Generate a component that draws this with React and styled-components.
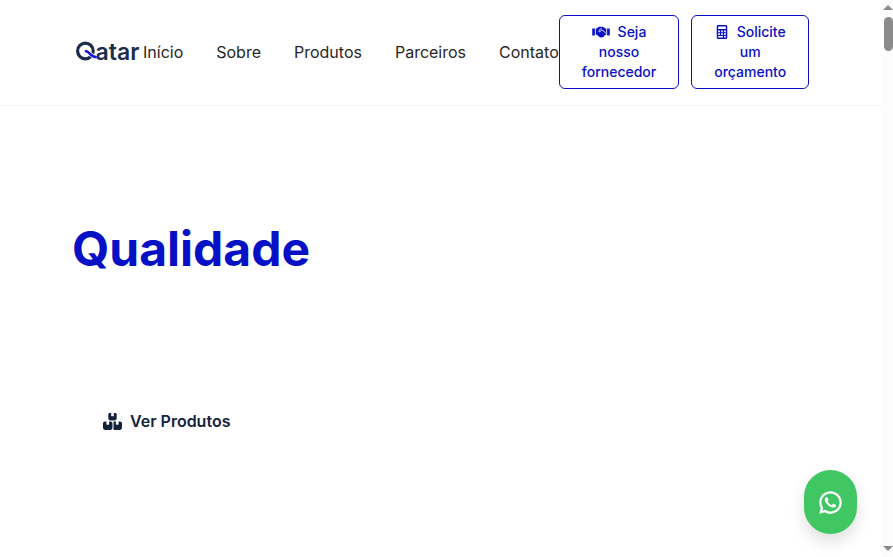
import React from "react";
import styled, { createGlobalStyle } from "styled-components";
import { FaBoxesStacked } from "react-icons/fa6";
import { RiWhatsappLine } from "react-icons/ri";

const GlobalStyle = createGlobalStyle`
  *, *::before, *::after { box-sizing: border-box; }
  body {
    margin: 0;
    overflow: hidden;
    background: #fff;
    font-family: Inter, "Liberation Sans", sans-serif;
    font-size: 16px;
    line-height: 24px;
  }
`;

const Shell = styled.div`
  display: flex;
  height: 100vh;
`;

const Page = styled.div`
  flex: 1;
  min-width: 0;
`;

const Header = styled.header`
  display: flex;
  align-items: center;
  justify-content: space-between;
  padding: 15px 72px 16px;
  border-bottom: 1px solid #f3f4f6;
`;

const LogoLink = styled.a`
  display: flex;
  flex: none;
`;

const Nav = styled.nav`
  display: flex;
  gap: 33px;
`;

const NavLink = styled.a`
  color: #262626;
  text-decoration: none;
`;

const Actions = styled.div`
  display: flex;
  gap: 12px;
`;

const OutlineButton = styled.button`
  width: min-content;
  padding: 6px 22px;
  border: 1px solid #0a10c4;
  border-radius: 6px;
  background: #fff;
  color: #0a10c4;
  font: 500 14px/20px Inter, "Liberation Sans", sans-serif;
  cursor: pointer;
`;

const ButtonLead = styled.span`
  display: inline-flex;
  align-items: center;
  gap: 8px;
  height: 20px;
  vertical-align: top;
`;

const Hero = styled.main`
  display: flex;
  flex-direction: column;
  align-items: flex-start;
  gap: 118px;
  padding: 113px 72px 0;
`;

const Title = styled.h1`
  margin: 0;
  color: #0610c4;
  font-size: 48px;
  font-weight: 700;
  line-height: 60px;
`;

const ProductsLink = styled.a`
  display: flex;
  align-items: center;
  gap: 8px;
  padding: 12px 31px;
  color: #14233c;
  font-weight: 600;
  text-decoration: none;
`;

const ChatButton = styled.button`
  position: fixed;
  right: 36px;
  bottom: 23px;
  display: flex;
  align-items: center;
  justify-content: center;
  width: 53px;
  height: 64px;
  padding: 0;
  border: 0;
  border-radius: 27px;
  background: #40c763;
  color: #fff;
  box-shadow: 0 8px 16px rgba(0, 0, 0, 0.12);
  cursor: pointer;
`;

const ScrollTrack = styled.div`
  display: flex;
  flex: none;
  flex-direction: column;
  align-items: flex-end;
  width: 12px;
  padding: 5px 0 6px;
  background: #fcfcfc;
`;

const ScrollArrow = styled.svg`
  display: block;
  width: 10px;
  height: 5px;
  fill: #8b8b8b;
`;

const ScrollThumb = styled.div`
  flex: none;
  width: 9px;
  height: 34px;
  margin: 7px 0 auto;
  border-radius: 5px;
  background: #8b8b8b;
`;

function Logo() {
  return (
    <svg width="71" height="32" viewBox="0 0 71 32" role="img" aria-label="Qatar">
      <circle cx="13.4" cy="15" r="7.8" fill="none" stroke="#1b2d4a" strokeWidth="3.2" />
      <text x="23.6" y="23.6" fill="#1b2d4a" fontFamily="Inter, sans-serif" fontSize="23" fontWeight="600">
        atar
      </text>
      <path d="M13 15c5-.4 5 6.200 12 6.200" fill="none" stroke="#fff" strokeWidth="4" />
      <path d="M12.800 15c5-.4 5 6.200 12 6.200" fill="none" stroke="#1113e0" strokeWidth="2.400" />
    </svg>
  );
}

function HandshakeIcon() {
  return (
    <svg width="18" height="14" viewBox="0 0 640 512" fill="currentColor" aria-hidden="true">
      <path d="M0 128h96v224a32 32 0 0 1-32 32H0zM544 128h96v256h-64a32 32 0 0 1-32-32z" />
      <path d="M128 128h36l66-58q14-8 30-6h120q18 0 30 10l62 54h40v224h-32l-66 82q-20 20-46 8-24 24-52 4-30 18-52-6L174 352h-46z" />
      <path
        d="M340 116 246 202q-22 26 4 44 18 8 34-6l68-62 130 106"
        fill="none"
        stroke="#fff"
        strokeWidth="32"
        strokeLinecap="round"
      />
    </svg>
  );
}

function CalculatorIcon() {
  return (
    <svg width="14" height="14" viewBox="-64 0 512 512" fill="currentColor" aria-hidden="true">
      <path
        fillRule="evenodd"
        d="M48 0h288a48 48 0 0 1 48 48v416a48 48 0 0 1-48 48H48a48 48 0 0 1-48-48V48A48 48 0 0 1 48 0zM52 56v92h280V56zM52 204v60h64v-60zM160 204v60h64v-60zM268 204v60h64v-60zM52 304v60h64v-60zM160 304v60h64v-60zM268 304v60h64v-60zM52 404v56h172v-56zM268 404v56h64v-56z"
      />
    </svg>
  );
}

const links = [
  ["Início", "#inicio"],
  ["Sobre", "#sobre"],
  ["Produtos", "#produtos"],
  ["Parceiros", "#parceiros"],
  ["Contato", "#contato"],
];

export default function App() {
  return (
    <>
      <GlobalStyle />
      <Shell>
        <Page>
          <Header>
            <LogoLink href="#inicio"><Logo /></LogoLink>
            <Nav>
              {links.map(([label, href]) => (
                <NavLink key={href} href={href}>{label}</NavLink>
              ))}
            </Nav>
            <Actions>
              <OutlineButton type="button">
                <ButtonLead><HandshakeIcon />Seja</ButtonLead> nosso fornecedor
              </OutlineButton>
              <OutlineButton type="button">
                <ButtonLead><CalculatorIcon />Solicite</ButtonLead> um orçamento
              </OutlineButton>
            </Actions>
          </Header>
          <Hero>
            <Title>Qualidade</Title>
            <ProductsLink href="#produtos"><FaBoxesStacked size={19} />Ver Produtos</ProductsLink>
          </Hero>
        </Page>
        <ScrollTrack aria-hidden="true">
          <ScrollArrow viewBox="0 0 10 5"><path d="M0 5 5 0l5 5z" /></ScrollArrow>
          <ScrollThumb />
          <ScrollArrow viewBox="0 0 10 5"><path d="M0 0h10L5 5z" /></ScrollArrow>
        </ScrollTrack>
      </Shell>
      <ChatButton type="button" aria-label="WhatsApp"><RiWhatsappLine size={27} /></ChatButton>
    </>
  );
}
